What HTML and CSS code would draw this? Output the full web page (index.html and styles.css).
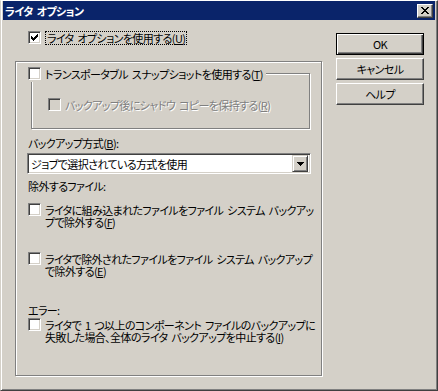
FILE: index.html
```
<!DOCTYPE html>
<html lang="ja">
<head>
  <meta charset="UTF-8" />
  <title>ライタ オプション</title>
  <link rel="stylesheet" href="styles.css">
</head>
<body>
  <div class="window">
    <div class="titlebar">
      <span class="title">ライタ オプション</span>
      <span class="close">
        <svg width="8" height="7" viewBox="0 0 8 7" shape-rendering="crispEdges">
          <path d="M0 0h2v1h-2zM6 0h2v1h-2zM1 1h2v1h-2zM5 1h2v1h-2zM2 2h4v1h-4zM3 3h2v1h-2zM2 4h4v1h-4zM1 5h2v1h-2zM5 5h2v1h-2zM0 6h2v1h-2zM6 6h2v1h-2z" fill="#000"/>
        </svg>
      </span>
    </div>

    <div class="body">
      <div class="main">
        <div class="check top-check">
          <span class="box">
            <svg width="7" height="7" viewBox="0 0 7 7" shape-rendering="crispEdges">
              <path d="M6 0h1v1h-1zM5 1h2v1h-2zM0 2h1v1h-1zM4 2h3v1h-3zM0 3h2v1h-2zM3 3h3v1h-3zM0 4h5v1h-5zM1 5h3v1h-3zM2 6h1v1h-1z" fill="#000"/>
            </svg>
          </span>
          <span class="focus">ライタ オプションを使用する(<u>U</u>)</span>
        </div>

        <div class="panel">
          <div class="group">
            <div class="check legend">
              <span class="box"></span>
              <span class="text">トランスポータブル スナップショットを使用する(<u>T</u>)</span>
            </div>
            <div class="check disabled keep-copy">
              <span class="box"></span>
              <span class="text">バックアップ後にシャドウ コピーを保持する(<u>R</u>)</span>
            </div>
          </div>

          <div class="label method-label">バックアップ方式(<u>B</u>):</div>
          <div class="select">
            <span class="value">ジョブで選択されている方式を使用</span>
            <span class="drop">
              <svg width="7" height="4" viewBox="0 0 7 4" shape-rendering="crispEdges">
                <path d="M0 0h7v1h-7zM1 1h5v1h-5zM2 2h3v1h-3zM3 3h1v1h-1z" fill="#000"/>
              </svg>
            </span>
          </div>

          <div class="label exclude-label">除外するファイル:</div>
          <div class="check multi first-exclude">
            <span class="box"></span>
            <span class="text">ライタに組み込まれたファイルをファイル システム バックアッ<br>プで除外する(<u>F</u>)</span>
          </div>
          <div class="check multi second-exclude">
            <span class="box"></span>
            <span class="text">ライタで除外されたファイルをファイル システム バックアップ<br>で除外する(<u>E</u>)</span>
          </div>

          <div class="label error-label">エラー:</div>
          <div class="check multi error-check">
            <span class="box"></span>
            <span class="text">ライタで 1 つ以上のコンポーネント ファイルのバックアップに<br>失敗した場合、全体のライタ バックアップを中止する(<u>I</u>)</span>
          </div>
        </div>
      </div>

      <div class="buttons">
        <div class="btn default"><span>OK</span></div>
        <div class="btn"><span>キャンセル</span></div>
        <div class="btn"><span>ヘルプ</span></div>
      </div>
    </div>
  </div>
</body>
</html>
```

FILE: styles.css
```
body {
  margin: 0;
  font-family: "Noto Sans CJK JP", "Noto Sans", sans-serif;
  font-size: 11px;
  line-height: 12px;
  letter-spacing: -0.6px;
  word-spacing: 2px;
  font-feature-settings: "palt";
  color: #000;
  background: #d4d0c8;
}
u {
  text-decoration-thickness: 1px;
  text-underline-offset: 1px;
}
.window {
  width: 438px;
  height: 391px;
  box-sizing: border-box;
  background: #d4d0c8;
  border-style: solid;
  border-width: 1px 1px 1px 1px;
  border-color: #ffffff #404040 #404040 #d4d0c8;
  box-shadow: inset 1px 0 #ffffff, inset -1px -1px #808080;
  padding: 0 2px 2px 2px;
}
.titlebar {
  height: 19px;
  background: #0a246a;
  display: flex;
  align-items: center;
  justify-content: space-between;
  padding: 0 2px;
}
.title {
  color: #ffffff;
  font-weight: bold;
  line-height: 12px;
}
.close {
  width: 16px;
  height: 14px;
  box-sizing: border-box;
  background: #d4d0c8;
  border: 1px solid;
  border-color: #ffffff #404040 #404040 #ffffff;
  box-shadow: inset -1px -1px #808080;
  display: flex;
  align-items: center;
  justify-content: center;
}

.body {
  display: flex;
  padding: 11px 0 0 12px;
}
.main {
  width: 307px;
}

/* checkbox rows */
.check {
  display: flex;
  align-items: flex-start;
}
.box {
  flex: none;
  width: 13px;
  height: 13px;
  box-sizing: border-box;
  background: #ffffff;
  border: 1px solid;
  border-color: #808080 #ffffff #ffffff #808080;
  box-shadow: inset 1px 1px #404040, inset -1px -1px #d4d0c8;
  display: flex;
  align-items: center;
  justify-content: center;
}
.check .text {
  margin-left: 4px;
  margin-top: 1px;
  white-space: nowrap;
}
.top-check {
  margin-left: 13px;
  height: 15px;
}
.focus {
  margin-left: 4px;
  border: 1px dotted #000;
  padding: 0 1px;
  line-height: 12px;
  white-space: nowrap;
}

.panel {
  margin-top: 15px;
  height: 315px;
  box-sizing: border-box;
  border: 1px solid #808080;
  box-shadow: inset 1px 1px #ffffff, 1px 1px #ffffff;
  padding: 0 10px 0 12px;
}
.group {
  position: relative;
  margin: 11px 0 0 3px;
  width: 279px;
  height: 56px;
  box-sizing: border-box;
  border: 1px solid #808080;
  box-shadow: inset 1px 1px #ffffff, 1px 1px #ffffff;
}
.legend {
  position: absolute;
  top: -7px;
  left: -4px;
  background: #d4d0c8;
  padding: 0 3px 2px 0;
}
.keep-copy {
  margin: 24px 0 0 16px;
}
.disabled .box {
  background: #d4d0c8;
}
.disabled .text {
  color: #808080;
  text-shadow: 1px 1px 0 #ffffff;
}

.label {
  height: 12px;
  white-space: nowrap;
}
.method-label {
  margin-top: 8px;
}
.select {
  margin: 4px 0 0 -1px;
  width: 284px;
  height: 21px;
  box-sizing: border-box;
  background: #ffffff;
  border: 1px solid;
  border-color: #808080 #ffffff #ffffff #808080;
  box-shadow: inset 1px 1px #404040, inset -1px -1px #d4d0c8;
  padding: 2px 2px 2px 3px;
  display: flex;
  align-items: center;
  justify-content: space-between;
}
.select .value {
  white-space: nowrap;
}
.drop {
  width: 16px;
  height: 17px;
  box-sizing: border-box;
  background: #d4d0c8;
  border: 1px solid;
  border-color: #d4d0c8 #404040 #404040 #d4d0c8;
  box-shadow: inset 1px 1px #ffffff, inset -1px -1px #808080;
  display: flex;
  align-items: center;
  justify-content: center;
}
.exclude-label {
  margin-top: 6px;
}
.first-exclude {
  margin-top: 11px;
}
.second-exclude {
  margin-top: 24px;
}
.multi {
  height: 25px;
}
.error-label {
  margin-top: 27px;
}
.error-check {
  margin-top: 2px;
}

/* push buttons */
.buttons {
  margin-left: 14px;
  padding-top: 2px;
  display: flex;
  flex-direction: column;
  gap: 3px;
}
.btn {
  width: 88px;
  height: 22px;
  box-sizing: border-box;
  border: 1px solid;
  border-color: #ffffff #404040 #404040 #ffffff;
  box-shadow: inset -1px -1px #808080;
  display: flex;
  align-items: center;
  justify-content: center;
}
.btn.default {
  border: 1px solid #000;
  box-shadow: inset 1px 1px #ffffff, inset -1px -1px #404040, inset -2px -2px #808080;
}
```
